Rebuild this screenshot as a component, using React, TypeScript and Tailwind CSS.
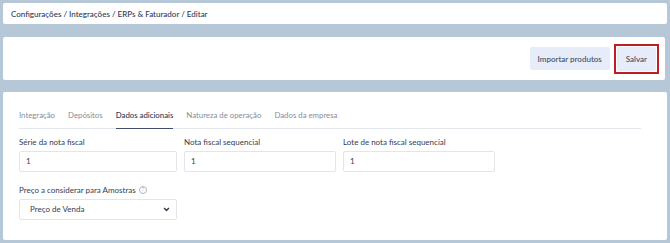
import React from 'react';

const tabs = ['Integração', 'Depósitos', 'Dados adicionais', 'Natureza de operação', 'Dados da empresa'];

export default function App() {
  return (
    <div className="w-[670px] h-[243px] bg-[#b6c7d8] pt-[3px] px-[3px] overflow-hidden font-['Lato',sans-serif] text-[8px]">
      {/* Breadcrumb */}
      <div className="h-[21px] bg-white rounded-[2px] flex items-center pl-[8px] text-[#2c3957] font-medium w-[664px]">
        Configurações / Integrações / ERPs &amp; Faturador / Editar
      </div>

      {/* Actions */}
      <div className="mt-[13px] h-[43px] bg-white rounded-[2px] flex items-center justify-end pr-[10px] gap-[4px] w-[662px]">
        <button className="h-[23px] px-[8px] bg-[#e6edf8] rounded-[2px] text-[#3d4a66] font-medium">Importar produtos</button>
        <div className="border-[2.5px] border-[#c01c24] p-[1px] -mr-[4px]">
          <button className="h-[24px] px-[9px] bg-[#e6edf8] rounded-[2px] text-[#3d4a66] font-medium">Salvar</button>
        </div>
      </div>

      {/* Main form */}
      <div className="mt-[12px] h-[148px] bg-white rounded-[2px] px-[16px] w-[664px]">
        <div className="flex gap-[13px] pt-[18px] border-b border-[#e3e7ee] mr-[10px] text-[7.8px]">
          {tabs.map((t) => (
            <div
              key={t}
              className={
                t === 'Dados adicionais'
                  ? 'pb-[6px] border-b-[1.5px] border-[#3f4d68] text-[#2e3a55] font-medium -mb-px'
                  : 'pb-[6px] text-[#858d9d]'
              }
            >
              {t}
            </div>
          ))}
        </div>

        <div className="flex gap-[7px] mt-[7px] text-[#333c50]">
          <div className="w-[158px]">
            <div className="mb-[3px]">Série da nota fiscal</div>
            <div className="h-[21px] border border-[#e2e5ea] rounded-[2px] flex items-center px-[6px]">1</div>
          </div>
          <div className="w-[152px]">
            <div className="mb-[3px]">Nota fiscal sequencial</div>
            <div className="h-[21px] border border-[#e2e5ea] rounded-[2px] flex items-center px-[6px]">1</div>
          </div>
          <div className="w-[152px]">
            <div className="mb-[3px]">Lote de nota fiscal sequencial</div>
            <div className="h-[21px] border border-[#e2e5ea] rounded-[2px] flex items-center px-[6px]">1</div>
          </div>
        </div>

        <div className="mt-[12px] text-[#333c50] w-[158px]">
          <div className="mb-[3px] flex items-center gap-[3px]">
            Preço a considerar para Amostras
            <span className="w-[8px] h-[8px] rounded-full border border-[#b0b6c2] text-[5px] text-[#9aa1ae] flex items-center justify-center leading-none">?</span>
          </div>
          <div className="h-[21px] border border-[#e2e5ea] rounded-[2px] flex items-center justify-between px-[6px] pl-[10px]">
            <span>Preço de Venda</span>
            <svg width="7" height="5" viewBox="0 0 10 7" fill="none">
              <path d="M1.5 1.5 L5 5 L8.5 1.5" stroke="#2e3648" strokeWidth="2" />
            </svg>
          </div>
        </div>
      </div>
    </div>
  );
}
